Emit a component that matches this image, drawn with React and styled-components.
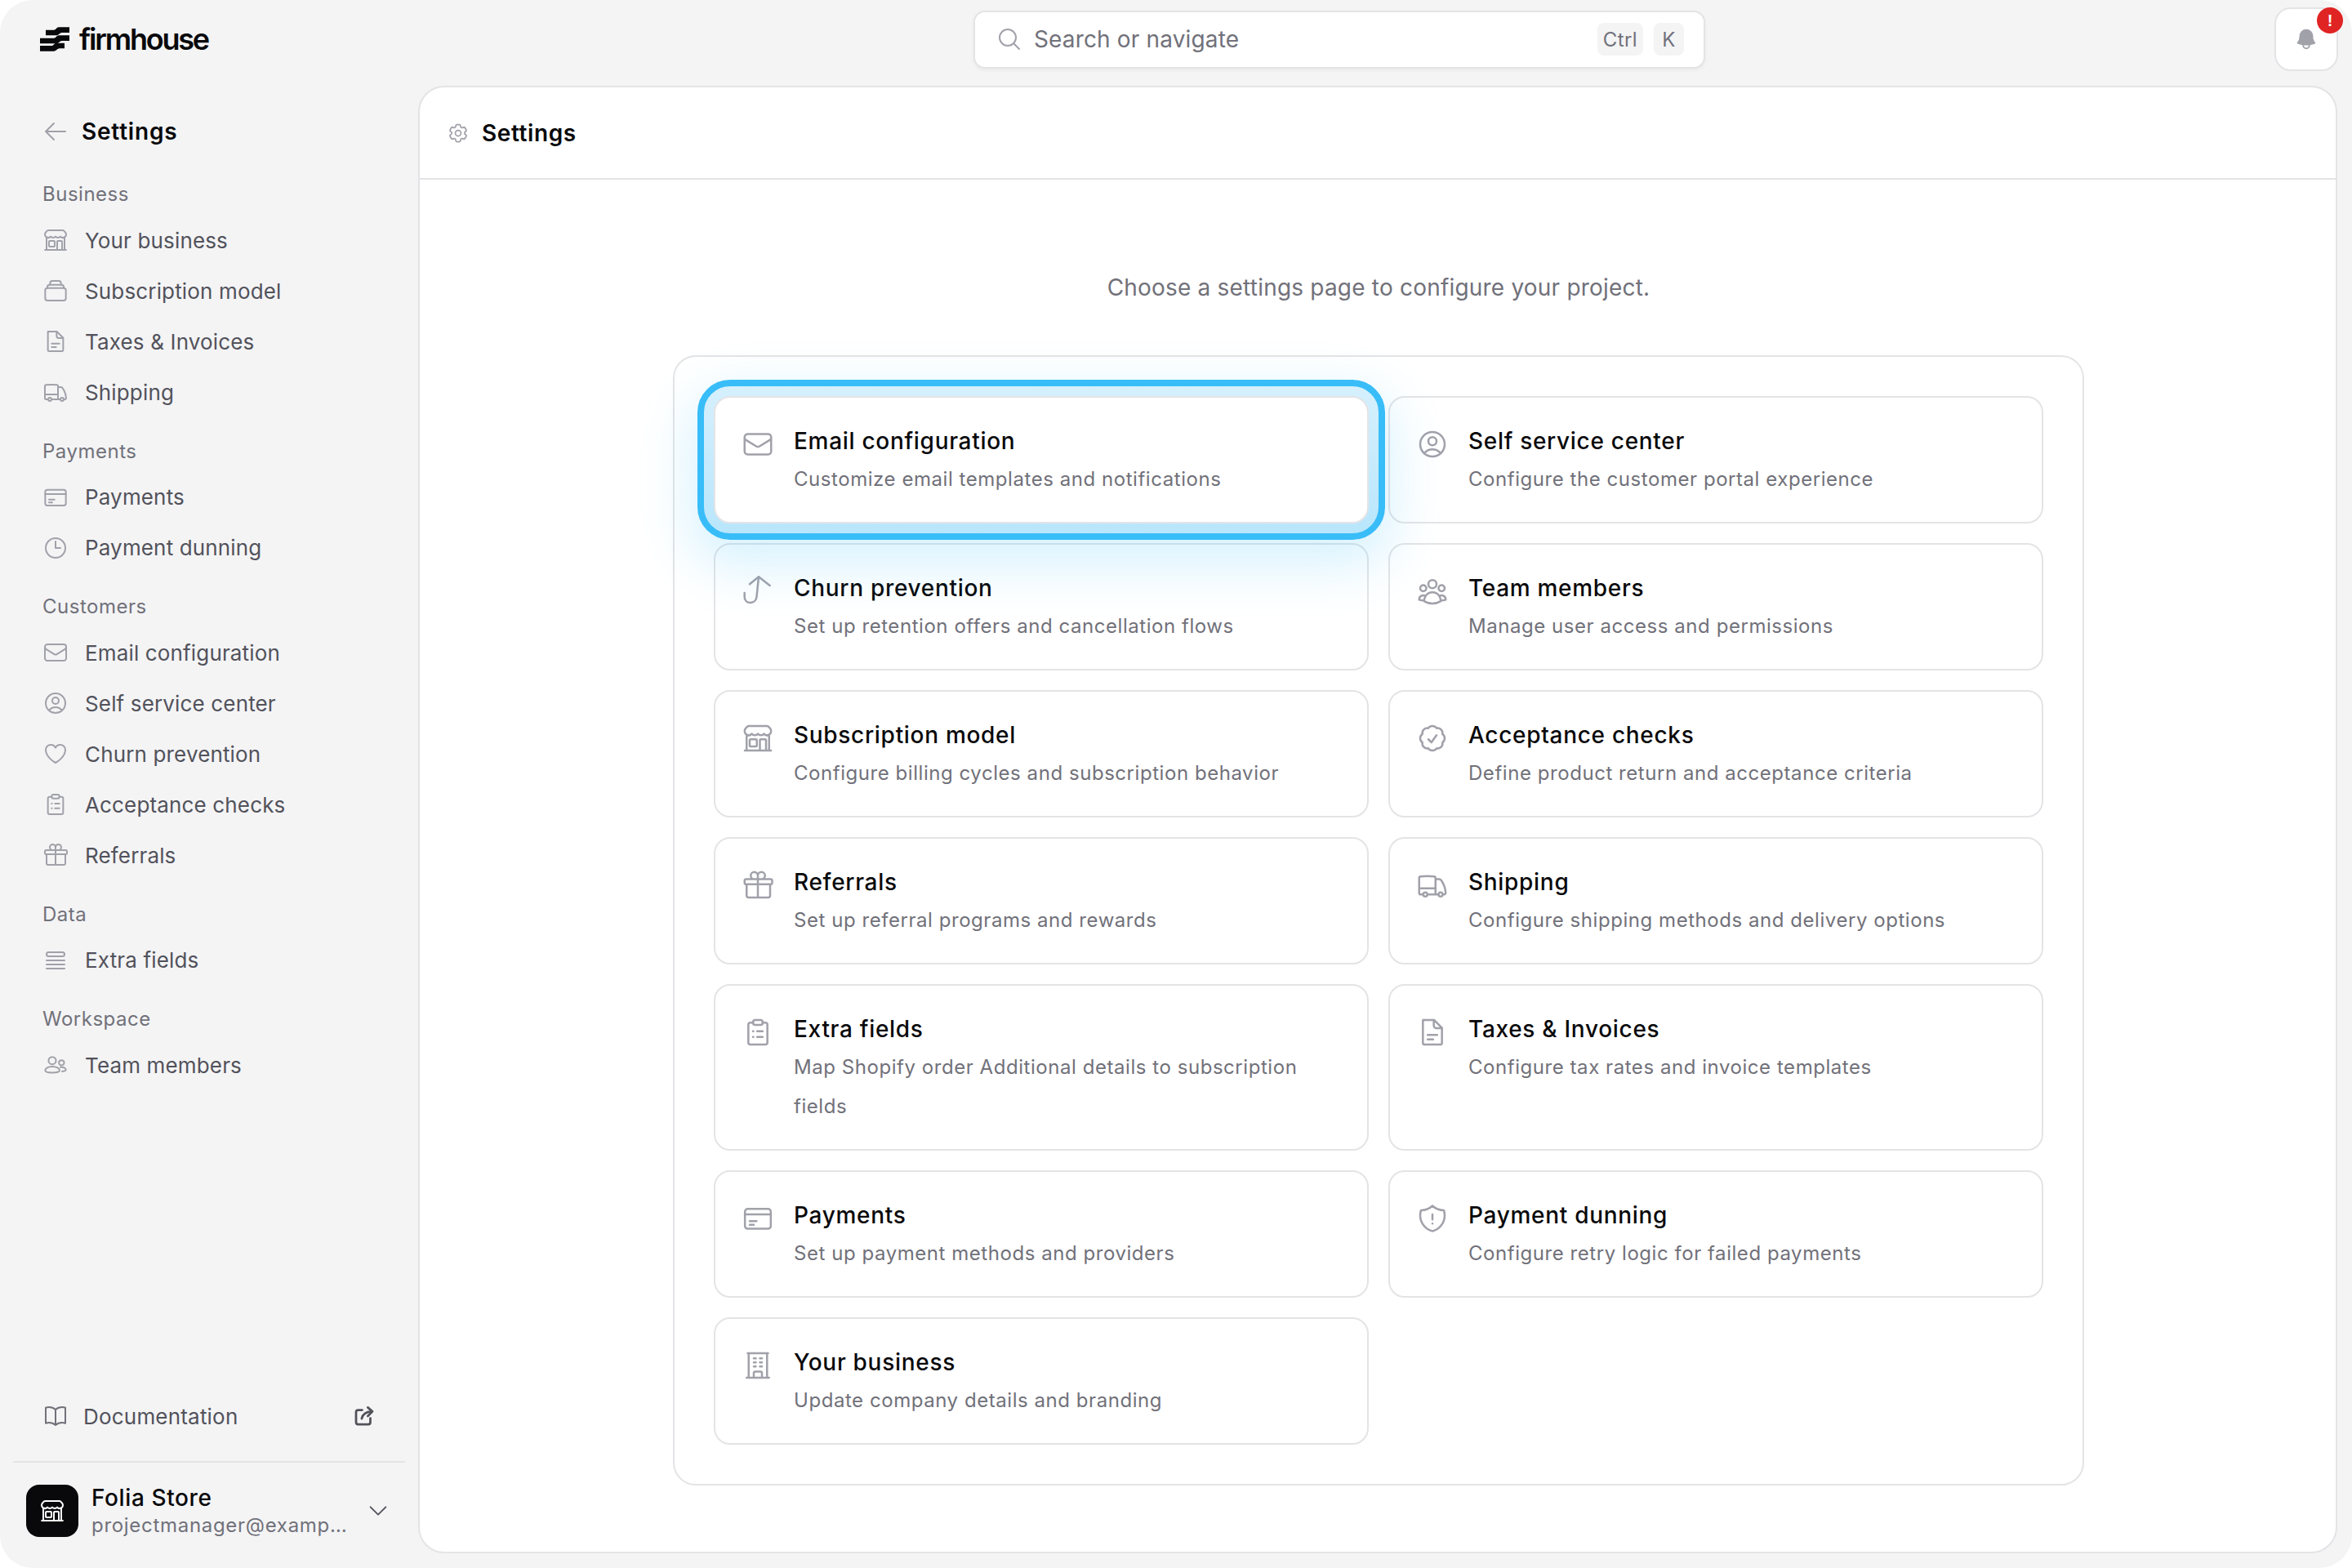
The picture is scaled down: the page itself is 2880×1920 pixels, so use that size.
import React from "react";
import styled, { createGlobalStyle, css } from "styled-components";
import {
  HiOutlineArrowLeft, HiOutlineBuildingStorefront, HiOutlineTruck, HiOutlineClock,
  HiOutlineEnvelope, HiOutlineUserCircle, HiOutlineHeart, HiOutlineGift, HiOutlineQueueList,
  HiOutlineBookOpen, HiOutlineChevronDown, HiOutlineCog6Tooth, HiOutlineMagnifyingGlass,
  HiBell, HiOutlineUserGroup, HiOutlineCheckBadge, HiOutlineShieldExclamation,
  HiOutlineBuildingOffice,
} from "react-icons/hi2";

const Svg = ({ children, ...p }) => (
  <svg viewBox="0 0 24 24" fill="none" stroke="currentColor" strokeWidth="1.5" strokeLinecap="round" strokeLinejoin="round" {...p}>
    {children}
  </svg>
);
const StackIcon = (p) => (
  <Svg {...p}>
    <rect x="2.5" y="9.500" width="19" height="11.500" rx="2" />
    <path d="M4.500 9.500v-1a2 2 0 0 1 2-2h11a2 2 0 0 1 2 2v1" />
    <path d="M7 6.500V5a2 2 0 0 1 2-2h6a2 2 0 0 1 2 2v1.500" />
  </Svg>
);
const DocIcon = (p) => (
  <Svg {...p}>
    <path d="M5 3h8.200L19 8.800V20a1 1 0 0 1-1 1H6a1 1 0 0 1-1-1V4a1 1 0 0 1 1-1z" />
    <path d="M13 3v4a2 2 0 0 0 2 2h4M8.500 14h7M8.500 17.200h4" />
  </Svg>
);
const CardIcon = (p) => (
  <Svg {...p}>
    <rect x="2.500" y="5" width="19" height="14.500" rx="2" />
    <path d="M2.500 9h19M6 14h5M6 16.600h3" />
  </Svg>
);
const ClipIcon = (p) => (
  <Svg {...p}>
    <path d="M8.500 5H6.500A1.500 1.500 0 0 0 5 6.500v13A1.500 1.500 0 0 0 6.500 21h11a1.500 1.500 0 0 0 1.500-1.500v-13A1.500 1.500 0 0 0 17.500 5h-2" />
    <rect x="8.500" y="3" width="7" height="3.600" rx="1.500" />
    <path d="M11.500 11.300h4M11.500 15.500h4M8.400 11.300h.3M8.400 15.500h.3" />
  </Svg>
);
const UsersIcon = (p) => (
  <Svg {...p}>
    <circle cx="9" cy="8" r="3.400" />
    <circle cx="17.500" cy="10" r="2.400" />
    <path d="M9 13.500c-3.800 0-6.500 1.600-6.500 3.600 0 1.300 2.500 2 6.500 2s6.800-.7 6.800-2c0-2-3-3.600-6.800-3.600z" />
    <path d="M16.500 14c2.800-.2 5 .9 5 2.400 0 1-1.500 1.500-3.500 1.600" />
  </Svg>
);
const ChurnIcon = (p) => (
  <Svg {...p}>
    <path d="M2.200 13.200V16c0 2.900 1.900 4.400 4.300 4.400 2.500 0 4.400-1.800 4.600-4.400L12.600 1.400" />
    <path d="M6 6.800 12.600 1.400l8.200 6.400" />
  </Svg>
);
const ExternalIcon = (p) => (
  <Svg strokeWidth="2.200" {...p}>
    <path d="M10 6H6a2 2 0 0 0-2 2v10a2 2 0 0 0 2 2h10a2 2 0 0 0 2-2v-4" />
    <path d="M9.500 14.500C10.500 10 14 7.500 20 7.500M15.500 3.500l4.500 4-4.500 4.500" />
  </Svg>
);
const LogoMark = (p) => (
  <svg viewBox="0 0 36 30" fill="#09090b" {...p}>
    <path d="M7 3.700h10c3 0 3-3.400 6-3.400h13V7h-9c-3 0-4 3.300-7 3.300H7z" />
    <path d="M0 13.700h17c3 0 3-3.400 6-3.400h13V17h-9c-3 0-4 3.300-7 3.300H0z" />
    <path d="M0 23h14c3 0 3-3.300 6-3.300h10v6.600h-6c-3 0-4 3.400-7 3.400H0z" />
  </svg>
);

const Global = createGlobalStyle`
  html, body { margin: 0; padding: 0; background: #ffffff; }
  #root { width: 2880px; height: 1920px; }
  * { box-sizing: border-box; }
`;

const Shell = styled.div`
  width: 2880px;
  height: 1920px;
  background: #f4f4f5;
  border-radius: 40px;
  overflow: hidden;
  display: grid;
  grid-template-columns: 512px 1fr;
  grid-template-rows: 96px 1fr;
  font-family: Inter, "Liberation Sans", sans-serif;
`;
const TopBar = styled.header`
  grid-column: 1 / 3;
  display: flex;
  align-items: center;
  padding-right: 17px;
`;
const LogoArea = styled.div`
  width: 512px;
  padding-left: 49px;
  display: flex;
  align-items: center;
  gap: 12px;
  color: #09090b;
`;
const LogoText = styled.span`
  font-size: 36px;
  font-weight: 600;
  letter-spacing: -2.2px;
  line-height: 40px;
`;
const SearchRegion = styled.div`
  flex: 1;
  display: flex;
  justify-content: center;
  padding-right: 17px;
`;
const SearchBox = styled.div`
  width: 896px;
  height: 71px;
  background: #fff;
  border: 2px solid #e4e4e7;
  border-radius: 14px;
  box-shadow: 0 2px 4px rgba(0, 0, 0, 0.05);
  display: flex;
  align-items: center;
  padding: 0 24px 0 26px;
  gap: 14px;
  font-size: 28px;
  letter-spacing: 0.15px;
  color: #71717a;
`;
const SearchText = styled.span`
  flex: 1;
`;
const Kbd = styled.span`
  background: #f4f4f5;
  border-radius: 8px;
  height: 40px;
  min-width: 37px;
  padding: 0 7px;
  display: inline-flex;
  align-items: center;
  justify-content: center;
  font-size: 24px;
  letter-spacing: 0.4px;
  color: #71717a;
  margin-left: -1px;
`;
const BellButton = styled.button`
  position: relative;
  width: 78px;
  height: 78px;
  background: #fff;
  border: 2px solid #e4e4e7;
  border-radius: 20px;
  padding: 0;
  display: flex;
  align-items: center;
  justify-content: center;
  color: #a1a1aa;
`;
const Badge = styled.span`
  position: absolute;
  top: -2px;
  right: -8px;
  width: 32px;
  height: 32px;
  background: #e02424;
  border-radius: 50%;
  color: #fff;
  font-size: 20px;
  font-weight: 700;
  display: flex;
  align-items: center;
  justify-content: center;
`;
const Sidebar = styled.aside`
  display: flex;
  flex-direction: column;
  padding: 40px 0 36px;
`;
const SideTitleRow = styled.div`
  display: flex;
  align-items: center;
  height: 50px;
  padding-left: 52px;
  gap: 16px;
  color: #a1a1aa;
  margin-bottom: 25px;
`;
const SideTitle = styled.h2`
  margin: 0;
  font-size: 28px;
  font-weight: 600;
  letter-spacing: 0.8px;
  color: #09090b;
`;
const Section = styled.section`
  margin-bottom: 14.5px;
`;
const SectionLabel = styled.div`
  height: 52px;
  line-height: 53px;
  padding-left: 52px;
  font-size: 24px;
  font-weight: 400;
  letter-spacing: 0.5px;
  color: #71717a;
`;
const NavItem = styled.div`
  height: 62px;
  display: flex;
  align-items: center;
  padding-left: 52px;
  gap: 20px;
  font-size: 26px;
  letter-spacing: 0.15px;
  color: #52525b;
  svg { width: 32px; height: 32px; color: #a1a1aa; flex: none; }
`;
const SideBottom = styled.div`
  margin-top: auto;
`;
const DocRow = styled.div`
  display: flex;
  align-items: center;
  height: 62px;
  padding: 0 51px 0 52px;
  gap: 18px;
  font-size: 26px;
  letter-spacing: 0.2px;
  color: #52525b;
  margin-bottom: 24px;
  svg { color: #71717a; width: 32px; height: 32px; flex: none; }
  svg:last-child { color: #52525b; width: 30px; height: 30px; }
`;
const DocText = styled.span`
  flex: 1;
`;
const UserRow = styled.div`
  margin: 0 16px;
  border-top: 2px solid #e4e4e7;
  padding: 25px 18px 0 16px;
  display: flex;
  align-items: center;
  gap: 16px;
`;
const Avatar = styled.div`
  width: 64px;
  height: 64px;
  flex: none;
  background: #09090b;
  border-radius: 16px;
  color: #fff;
  display: flex;
  align-items: center;
  justify-content: center;
`;
const UserText = styled.div`
  flex: 1;
  min-width: 0;
  margin-right: 3px;
`;
const UserName = styled.div`
  font-size: 28px;
  line-height: 36px;
  font-weight: 500;
  letter-spacing: 0.6px;
  color: #09090b;
`;
const UserMail = styled.div`
  font-size: 24px;
  line-height: 32px;
  letter-spacing: 0.7px;
  color: #71717a;
  white-space: nowrap;
  overflow: hidden;
  text-overflow: ellipsis;
`;
const Chevron = styled(HiOutlineChevronDown)`
  width: 30px;
  height: 30px;
  color: #52525b;
  flex: none;
`;
const Panel = styled.main`
  margin: 9px 18px 18px 0;
  background: #fff;
  border: 2px solid #e4e4e7;
  border-radius: 32px;
  display: flex;
  flex-direction: column;
  overflow: hidden;
`;
const PanelHeader = styled.div`
  height: 113px;
  flex: none;
  border-bottom: 2px solid #e4e4e7;
  display: flex;
  align-items: center;
  padding-left: 33px;
  gap: 15px;
  color: #a1a1aa;
`;
const PanelTitle = styled.h1`
  margin: 0;
  font-size: 28px;
  font-weight: 600;
  letter-spacing: 0.6px;
  color: #09090b;
`;
const PanelBody = styled.div`
  flex: 1;
  display: flex;
  flex-direction: column;
  align-items: center;
  padding-left: 2px;
`;
const Intro = styled.p`
  margin: 112px 0 0;
  height: 40px;
  line-height: 40px;
  font-size: 28px;
  letter-spacing: 0.2px;
  color: #71717a;
`;
const Container = styled.div`
  width: 1728px;
  margin-top: 63px;
  padding: 48px;
  border: 2px solid #e4e4e7;
  border-radius: 28px;
  display: grid;
  grid-template-columns: 1fr 1fr;
  gap: 24px;
`;
const activeCard = css`
  background: transparent;
  border-color: transparent;
  &::before {
    content: "";
    position: absolute;
    inset: -22px;
    z-index: -2;
    border: 8px solid #38bdf8;
    border-radius: 40px;
    background: linear-gradient(#d6f0fd, #b9e6fc);
    box-shadow: 0 24px 64px 8px rgba(56, 189, 248, 0.2);
  }
  &::after {
    content: "";
    position: absolute;
    inset: -2px;
    z-index: -1;
    background: #fff;
    border: 2px solid #e4e4e7;
    border-radius: 20px;
  }
`;
const Card = styled.div`
  position: relative;
  z-index: ${(p) => (p.$active ? 2 : 0)};
  border: 2px solid #e4e4e7;
  border-radius: 20px;
  padding: 28px 32px;
  display: flex;
  gap: 24px;
  svg { width: 40px; height: 40px; flex: none; color: #a1a1aa; margin-top: 9px; }
  ${(p) => p.$active && activeCard}
`;
const CardTitle = styled.div`
  font-size: 28px;
  line-height: 40px;
  font-weight: 500;
  letter-spacing: 0.7px;
  color: #09090b;
  margin-top: 5px;
`;
const CardDesc = styled.div`
  font-size: 24px;
  line-height: 48px;
  color: #71717a;
  letter-spacing: 0.55px;
  margin-top: 3px;
`;

const sections = [
  ["Business", [["Your business", HiOutlineBuildingStorefront], ["Subscription model", StackIcon], ["Taxes & Invoices", DocIcon], ["Shipping", HiOutlineTruck]]],
  ["Payments", [["Payments", CardIcon], ["Payment dunning", HiOutlineClock]]],
  ["Customers", [["Email configuration", HiOutlineEnvelope], ["Self service center", HiOutlineUserCircle], ["Churn prevention", HiOutlineHeart], ["Acceptance checks", ClipIcon], ["Referrals", HiOutlineGift]]],
  ["Data", [["Extra fields", HiOutlineQueueList]]],
  ["Workspace", [["Team members", UsersIcon]]],
];
const cards = [
  ["Email configuration", "Customize email templates and notifications", HiOutlineEnvelope],
  ["Self service center", "Configure the customer portal experience", HiOutlineUserCircle],
  ["Churn prevention", "Set up retention offers and cancellation flows", ChurnIcon],
  ["Team members", "Manage user access and permissions", HiOutlineUserGroup],
  ["Subscription model", "Configure billing cycles and subscription behavior", HiOutlineBuildingStorefront],
  ["Acceptance checks", "Define product return and acceptance criteria", HiOutlineCheckBadge],
  ["Referrals", "Set up referral programs and rewards", HiOutlineGift],
  ["Shipping", "Configure shipping methods and delivery options", HiOutlineTruck],
  ["Extra fields", "Map Shopify order Additional details to subscription fields", ClipIcon],
  ["Taxes & Invoices", "Configure tax rates and invoice templates", DocIcon],
  ["Payments", "Set up payment methods and providers", CardIcon],
  ["Payment dunning", "Configure retry logic for failed payments", HiOutlineShieldExclamation],
  ["Your business", "Update company details and branding", HiOutlineBuildingOffice],
];

export default function App() {
  return (
    <>
      <Global />
      <Shell>
        <TopBar>
          <LogoArea>
            <LogoMark width="36" height="30" />
            <LogoText>firmhouse</LogoText>
          </LogoArea>
          <SearchRegion>
            <SearchBox>
              <HiOutlineMagnifyingGlass size={32} color="#a1a1aa" />
              <SearchText>Search or navigate</SearchText>
              <Kbd>Ctrl</Kbd>
              <Kbd>K</Kbd>
            </SearchBox>
          </SearchRegion>
          <BellButton>
            <HiBell size={30} />
            <Badge>!</Badge>
          </BellButton>
        </TopBar>
        <Sidebar>
          <SideTitleRow>
            <HiOutlineArrowLeft size={32} />
            <SideTitle>Settings</SideTitle>
          </SideTitleRow>
          {sections.map(([label, items]) => (
            <Section key={label}>
              <SectionLabel>{label}</SectionLabel>
              {items.map(([text, Icon]) => (
                <NavItem key={text}>
                  <Icon />
                  {text}
                </NavItem>
              ))}
            </Section>
          ))}
          <SideBottom>
            <DocRow>
              <HiOutlineBookOpen />
              <DocText>Documentation</DocText>
              <ExternalIcon />
            </DocRow>
            <UserRow>
              <Avatar>
                <HiOutlineBuildingStorefront size={32} />
              </Avatar>
              <UserText>
                <UserName>Folia Store</UserName>
                <UserMail>projectmanager@example.com</UserMail>
              </UserText>
              <Chevron />
            </UserRow>
          </SideBottom>
        </Sidebar>
        <Panel>
          <PanelHeader>
            <HiOutlineCog6Tooth size={28} />
            <PanelTitle>Settings</PanelTitle>
          </PanelHeader>
          <PanelBody>
            <Intro>Choose a settings page to configure your project.</Intro>
            <Container>
              {cards.map(([title, desc, Icon], i) => (
                <Card key={title} $active={i === 0}>
                  <Icon />
                  <div>
                    <CardTitle>{title}</CardTitle>
                    <CardDesc>{desc}</CardDesc>
                  </div>
                </Card>
              ))}
            </Container>
          </PanelBody>
        </Panel>
      </Shell>
    </>
  );
}
